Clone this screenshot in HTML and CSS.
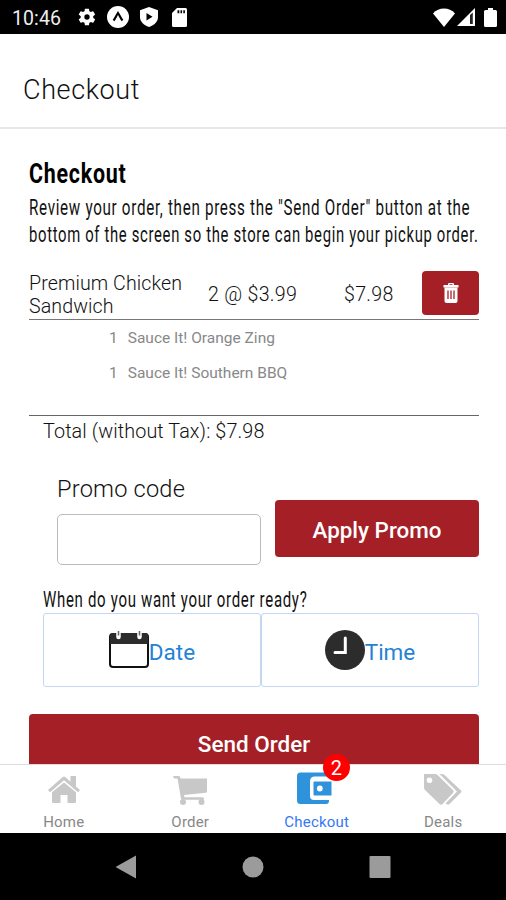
FILE: index.html
```html
<!DOCTYPE html>
<html lang="en">
<head>
    <meta charset="UTF-8">
    <meta name="viewport" content="width=device-width, initial-scale=1.0">
    <title>Checkout</title>
    <link rel="stylesheet" href="styles.css">
</head>
<body>
    <div class="phone">
        <div class="status-bar">
            <span class="clock">10:46</span>
            <svg class="gear" width="20" height="20" viewBox="0 0 24 24"><path d="M19.4 13a7.500 7.500 0 0 0 0-2l2.100-1.600a.5.5 0 0 0 .1-.7l-2-3.400a.5.5 0 0 0-.6-.2l-2.500 1a7.300 7.300 0 0 0-1.700-1l-.4-2.700a.5.5 0 0 0-.5-.4h-4a.5.5 0 0 0-.5.4L9 5.100a7.700 7.700 0 0 0-1.700 1l-2.500-1a.5.5 0 0 0-.6.200l-2 3.400a.5.5 0 0 0 .1.700L4.500 11a7.900 7.900 0 0 0 0 2l-2.200 1.600a.5.5 0 0 0-.1.700l2 3.400c.1.200.4.300.6.200l2.500-1c.5.400 1.100.7 1.700 1l.4 2.700c0 .2.200.4.500.4h4c.2 0 .5-.2.500-.4l.4-2.700c.6-.3 1.200-.6 1.700-1l2.500 1c.2.100.5 0 .6-.2l2-3.400a.5.5 0 0 0-.1-.7zM12 15.200a3.200 3.200 0 1 1 0-6.400 3.200 3.200 0 0 1 0 6.400z"/></svg>
            <svg class="expo" width="22" height="22" viewBox="0 0 22 22"><circle cx="11" cy="11" r="11"/><path d="M6.500 14.500C8 13 9.300 9.500 11 7c1.700 2.500 3 6 4.500 7.500" fill="none" stroke="#000" stroke-width="2.200"/></svg>
            <svg class="shield" width="18" height="20" viewBox="0 0 18 20"><path d="M9 0l9 3.300V10c0 4.500-3.500 8-9 10-5.500-2-9-5.500-9-10V3.300z"/><path d="M6.500 6v7.500l6-3.700z" fill="#000"/></svg>
            <svg class="sd" width="15" height="19" viewBox="0 0 15 19"><path d="M5 0h8.500A1.500 1.500 0 0 1 15 1.500v16a1.500 1.500 0 0 1-1.500 1.500h-12A1.500 1.500 0 0 1 0 17.500V5z"/><path d="M5.500 2.300h1.800v3H5.500zM8.500 2.300h1.600v3H8.500zM11.300 2.300h1.600v3h-1.600z" fill="#000"/></svg>
            <span class="spacer"></span>
            <svg class="wifi" width="22" height="19" viewBox="0 0 22 19"><path d="M11 19L0 5.500C5.500-1.300 16.500-1.300 22 5.500z"/></svg>
            <svg class="signal" width="18" height="18" viewBox="0 0 18 18"><path d="M18 0v18H0z"/><path d="M13 7l2.800-2.500V16H13z" fill="#222"/></svg>
            <svg class="battery" width="13" height="19" viewBox="0 0 13 19"><path d="M4 0h5v2h2.500A1.500 1.500 0 0 1 13 3.500v14a1.500 1.500 0 0 1-1.500 1.500h-10A1.500 1.500 0 0 1 0 17.500v-14A1.500 1.500 0 0 1 1.500 2H4z"/></svg>
        </div>

        <div class="header">Checkout</div>

        <div class="content">
            <h1 class="title"><span>Checkout</span></h1>
            <div class="intro">
                <span class="intro-first">Review your order, then press the "Send Order" button at the</span>
                <span class="intro-second">bottom of the screen so the store can begin your pickup order.</span>
            </div>

            <div class="item">
                <div class="item-name">Premium Chicken Sandwich</div>
                <div class="item-qty">2 @ $3.99</div>
                <div class="item-price">$7.98</div>
                <button class="delete">
                    <svg width="18" height="20" viewBox="0 0 18 20"><path d="M6 2V1.300Q6 0 7.300 0h3.400Q12 0 12 1.300V2h4.500v2.500h-15V2zM7.500 2h3v-.7h-3z" fill="#fff" fill-rule="evenodd"/><path d="M2.500 4.500h13V18q0 2-2 2h-9q-2 0-2-2z" fill="#fff"/><path d="M6 7.500v8.500M9 7.500v8.500M12 7.500v8.500" stroke="#a51f27" stroke-width="1.300"/></svg>
                </button>
            </div>
            <div class="options">
                <div class="option"><span>1</span><span>Sauce It! Orange Zing</span></div>
                <div class="option"><span>1</span><span>Sauce It! Southern BBQ</span></div>
            </div>
            <div class="total">Total (without Tax): $7.98</div>

            <div class="promo">
                <div class="promo-field">
                    <label for="promo">Promo code</label>
                    <input id="promo" type="text">
                </div>
                <button class="red-button apply">Apply Promo</button>
            </div>

            <div class="when"><span>When do you want your order ready?</span></div>
            <div class="pickers">
                <button class="picker">
                    <svg width="40" height="40" viewBox="0 0 40 40"><rect x="1" y="4" width="38" height="33" rx="3" fill="#fff" stroke="#111" stroke-width="2"/><path d="M1 14V6q0-3 3-3h32q3 0 3 3v8z" fill="#2c2c2c"/><path d="M9.500 3v4M30.500 3v4" stroke="#fff" stroke-width="4.500" stroke-linecap="round"/><path d="M9.500 1v4.500M30.500 1v4.500" stroke="#666" stroke-width="1.500"/></svg>
                    <span>Date</span>
                </button>
                <button class="picker">
                    <svg width="40" height="40" viewBox="0 0 40 40"><circle cx="20" cy="20" r="20" fill="#2c2c2c"/><path d="M20.300 8v14.500H10" fill="none" stroke="#fff" stroke-width="3" stroke-linecap="round"/></svg>
                    <span>Time</span>
                </button>
            </div>
            <button class="red-button send">Send Order</button>
        </div>

        <div class="tabs">
            <div class="tab">
                <svg width="34" height="34" viewBox="0 0 34 34"><path d="M17 9.500l12 9.700v9.300q0 1.500-1.500 1.500H20.500v-8h-7v8h-7Q5 30 5 28.500v-9.300z"/><path d="M1 17L15.800 4q1.200-1 2.400 0l5.300 4.700V3H29v10.500l4 3.500-2 2.200L17 7.200 3 19.200z"/></svg>
                <span>Home</span>
            </div>
            <div class="tab">
                <svg width="36" height="34" viewBox="0 0 36 34"><path d="M1 3h5.800q1 0 1.300 1L8.600 5.500H35v13.300q0 .7-.9.900L12 22l.5 2.200h18q1.500 0 1.500 1.500v1H10.500q-1.300 0-1.500-1L5.500 5.500H2z"/><circle cx="11" cy="29" r="3"/><circle cx="29.500" cy="29" r="3"/></svg>
                <span>Order</span>
            </div>
            <div class="tab active">
                <svg width="40" height="34" viewBox="0 0 40 34"><path d="M3.500-.5H30q3 0 3 3v1H18q-5 0-5 5v14.500q0 4 4 4H32v1q0 3-3 3H3.500Q0 31 0 27.500V3Q0-.5 3.500-.5z"/><path d="M17.500 8.500H34.500v14H17.500q-1 0-1-1v-12q0-1 1-1z"/><circle cx="22.800" cy="15.500" r="2.900" fill="#fff"/></svg>
                <span>Checkout</span>
                <b class="badge">2</b>
            </div>
            <div class="tab">
                <svg width="40" height="34" viewBox="0 0 40 34"><path fill-rule="evenodd" d="M1.500 1H12q1.500 0 2.500 1L30 17q1.500 1.500 0 3L19.500 31q-1.500 1.500-3 0L2 17Q1 16 1 14.500V2q0-1 .5-1zM6.500 4.500a2.800 2.800 0 1 0 0 5.600 2.800 2.800 0 0 0 0-5.600z"/><path d="M16.500 1h2.500q1.500 0 2.500 1l16.500 15.500q1 1 0 2L26.500 31q-1.500 1-3 0l-.8-.8L34 18.500z"/></svg>
                <span>Deals</span>
            </div>
        </div>

        <div class="nav-bar">
            <svg width="22" height="24" viewBox="0 0 22 24"><path d="M21 .5v23L.5 12z"/></svg>
            <svg width="22" height="22" viewBox="0 0 22 22"><circle cx="11" cy="11" r="10.500"/></svg>
            <svg width="22" height="22" viewBox="0 0 22 22"><rect x=".5" width="21" height="22" rx="1"/></svg>
        </div>
    </div>
</body>
</html>
```

FILE: styles.css
```css
* {
    box-sizing: border-box;
}
body {
    margin: 0;
    font-family: Roboto, sans-serif;
    color: #111;
    background: #fff;
}
button {
    font-family: inherit;
    padding: 0;
    border: none;
}
svg {
    display: block;
    flex: none;
    overflow: visible;
}
.phone {
    display: flex;
    flex-direction: column;
    width: 506px;
    height: 900px;
    overflow: hidden;
}
.status-bar {
    display: flex;
    align-items: center;
    flex: none;
    height: 34px;
    padding: 0 9px 0 12px;
    background: #000;
    color: #eee;
    fill: #fff;
}
.clock {
    width: 65px;
    padding-top: 2px;
    font-size: 19.500px;
    letter-spacing: 0.1px;
}
.expo {
    margin-left: 10px;
}
.shield {
    margin-left: 11px;
}
.sd {
    margin-left: 14px;
}
.spacer {
    flex: 1;
}
.signal {
    margin-left: 2px;
}
.battery {
    margin-left: 9px;
}
.header {
    flex: none;
    height: 95px;
    padding: 40px 24px 0 23px;
    border-bottom: 2px solid #e7e7e7;
    font-size: 27px;
    font-weight: 350;
    line-height: 32px;
    letter-spacing: 0.6px;
}
.content {
    flex: 1;
    min-height: 0;
    overflow: hidden;
    padding: 28px 27px 0 29px;
}
.title {
    margin: 0;
    font-size: 28px;
    line-height: 34px;
    color: #000;
    white-space: nowrap;
}
/* narrow lettering for the headings */
.title span,
.intro span,
.when span {
    display: inline-block;
    transform-origin: 0 50%;
    white-space: nowrap;
    letter-spacing: 1px;
}
.title span {
    transform: scaleX(0.765);
}
.intro {
    display: flex;
    flex-direction: column;
    align-items: flex-start;
    padding-top: 4px;
    font-size: 22px;
    line-height: 26.500px;
}
.intro .intro-first {
    transform: scaleX(0.69);
}
.intro .intro-second {
    transform: scaleX(0.674);
}
.item {
    display: flex;
    align-items: center;
    height: 52px;
    margin-top: 20px;
    border-bottom: 1px solid #777;
    font-size: 19.600px;
    font-weight: 350;
    line-height: 23px;
    letter-spacing: 0.1px;
}
.item-name {
    width: 179px;
    padding-top: 2px;
}
.item-qty {
    width: 136px;
    padding-top: 2px;
    letter-spacing: 0.3px;
}
.item-price {
    flex: 1;
    padding-top: 2px;
    letter-spacing: 0.3px;
}
.delete {
    display: flex;
    align-items: center;
    justify-content: center;
    width: 57px;
    height: 44px;
    margin-bottom: 2px;
    border-radius: 4px;
    background: #a51f27;
}
.options {
    height: 96px;
    padding: 1px 0 0 80px;
    border-bottom: 1px solid #666;
}
.option {
    display: flex;
    gap: 10px;
    font-size: 15.500px;
    line-height: 35px;
    color: #888;
}
.total {
    padding: 3px 0 0 14px;
    font-size: 19.800px;
    font-weight: 350;
    line-height: 25px;
    letter-spacing: 0.1px;
}
.promo {
    display: flex;
    align-items: flex-start;
    justify-content: space-between;
    padding: 31px 0 0 28px;
}
.promo-field {
    width: 204px;
}
.promo-field label {
    display: block;
    height: 39px;
    font-size: 23.600px;
    font-weight: 350;
    line-height: 29px;
    letter-spacing: 0.2px;
}
.promo-field input {
    display: block;
    width: 100%;
    height: 51px;
    border: 1px solid #bbb;
    border-radius: 5px;
}
.red-button {
    border-radius: 4px;
    background: #a51f27;
    color: #fff;
    font-weight: 500;
}
.apply {
    width: 204px;
    height: 57px;
    margin-top: 25px;
    padding-top: 3px;
    font-size: 22.400px;
}
.when {
    padding: 21px 0 0 14px;
    font-size: 22px;
    line-height: 28px;
}
.when span {
    transform: scaleX(0.682);
}
.pickers {
    display: flex;
    margin: -1px 0 0 14px;
}
.picker {
    display: flex;
    align-items: center;
    justify-content: center;
    flex: 1;
    height: 74px;
    border: 1px solid #c3d6f2;
    border-radius: 3px;
    background: #fff;
    color: #1f83d6;
    font-size: 22.500px;
}
.picker span {
    padding-top: 3px;
}
.send {
    display: block;
    width: 100%;
    height: 60px;
    margin-top: 27px;
    font-size: 22.500px;
}
.tabs {
    display: flex;
    flex: none;
    height: 69px;
    border-top: 1px solid #ddd;
    background: #fff;
}
.tab {
    position: relative;
    display: flex;
    flex-direction: column;
    align-items: center;
    flex: 1;
    padding: 8px 0 0 1px;
    gap: 5px;
    fill: #c8c8c8;
    color: #888;
    font-size: 15px;
    line-height: 20px;
    letter-spacing: 0.2px;
}
.tab.active {
    fill: #2f93dc;
    color: #3478f6;
}
.badge {
    position: absolute;
    top: -11px;
    left: 70px;
    width: 27px;
    height: 27px;
    border-radius: 50%;
    background: #f00;
    color: #fff;
    font-size: 20px;
    font-weight: 400;
    line-height: 28px;
    text-align: center;
}
.nav-bar {
    display: flex;
    align-items: center;
    justify-content: center;
    gap: 105px;
    flex: none;
    height: 67px;
    background: #000;
    fill: #9b9b9b;
}
```
